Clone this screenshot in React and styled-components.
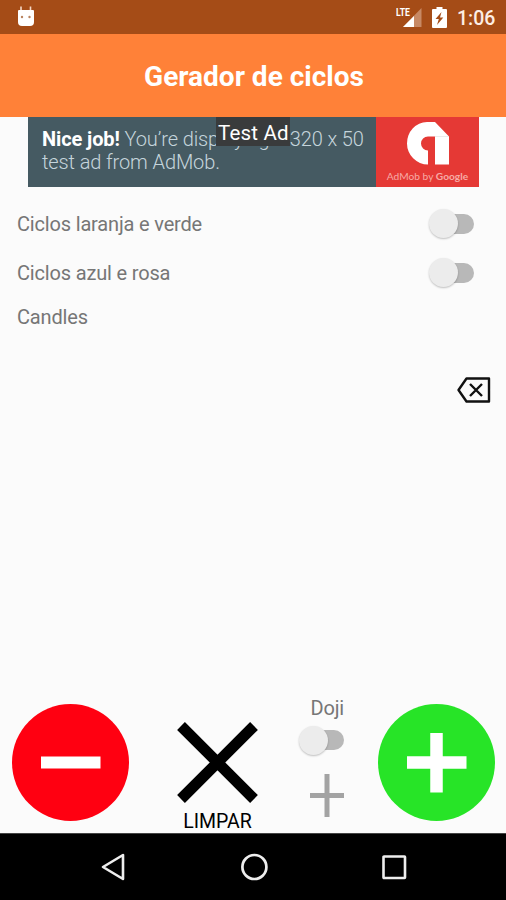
import { useState } from 'react';
import styled, { createGlobalStyle } from 'styled-components';

const GlobalStyle = createGlobalStyle`
  * {
    box-sizing: border-box;
  }

  body {
    margin: 0;
    background: #fbfbfb;
    font-family: Roboto, 'Liberation Sans', sans-serif;
  }

  button {
    padding: 0;
    border: 0;
    background: none;
    font-family: inherit;
    cursor: pointer;
  }

  svg {
    display: block;
  }
`;

const Screen = styled.div`
  display: flex;
  flex-direction: column;
  width: 506px;
  height: 900px;
  overflow: hidden;
`;

// Android status bar
const StatusBar = styled.div`
  display: flex;
  align-items: center;
  height: 34px;
  padding: 0 11px 0 17px;
  background: #a54c17;
  color: #fff;
`;

const StatusIcons = styled.div`
  display: flex;
  align-items: center;
  gap: 10px;
  margin-left: auto;
`;

const Clock = styled.span`
  width: 38px;
  padding-top: 3px;
  color: #fdeee5;
  font-size: 19.5px;
  font-weight: 500;
  line-height: 24px;
  white-space: nowrap;
`;

const Header = styled.header`
  display: flex;
  align-items: center;
  justify-content: center;
  height: 83px;
  padding: 3px 0 0 2px;
  background: #ff8138;
`;

const Title = styled.h1`
  margin: 0;
  color: #fff;
  font-size: 28px;
  font-weight: 700;
  line-height: 34px;
`;

// Ad banner
const Banner = styled.div`
  position: relative;
  display: flex;
  width: 451px;
  height: 70px;
  margin-left: 28px;
  background: #455a62;
`;

const BannerText = styled.p`
  flex: 1;
  margin: 0;
  padding: 11px 0 0 14px;
  color: #c5d5dc;
  font-size: 20px;
  font-weight: 300;
  line-height: 23px;
  letter-spacing: -0.11px;
  white-space: nowrap;

  strong {
    color: #fff;
    font-weight: 700;
  }
`;

const BannerTag = styled.span`
  position: absolute;
  top: 0;
  left: 188px;
  width: 74px;
  height: 29px;
  padding-left: 2px;
  background: #393b3c;
  color: #fff;
  font-size: 20.5px;
  line-height: 32px;
  letter-spacing: 0.2px;
  white-space: nowrap;
`;

const BannerLogo = styled.div`
  display: flex;
  flex-direction: column;
  align-items: center;
  width: 103px;
  padding-top: 5px;
  background: #e53935;
`;

const LogoCaption = styled.span`
  margin-top: 4px;
  color: #f7aaa5;
  font-family: Lato, sans-serif;
  font-size: 10.2px;
  line-height: 14px;
  white-space: nowrap;

  b {
    font-weight: 700;
  }
`;

const Content = styled.main`
  display: flex;
  flex: 1;
  flex-direction: column;
`;

const Options = styled.div`
  display: flex;
  flex-direction: column;
  padding: 12px 32px 0 17px;
`;

const OptionRow = styled.div`
  display: flex;
  align-items: center;
  justify-content: space-between;
  height: ${({ $height }) => $height}px;
`;

const Label = styled.span`
  padding-top: 1px;
  color: #767676;
  font-size: 20px;
  line-height: 24px;
  letter-spacing: -0.17px;
`;

const Track = styled.button`
  position: relative;
  display: flex;
  align-items: center;
  justify-content: ${({ $on }) => ($on ? 'flex-end' : 'flex-start')};
  width: 45px;
  height: 30px;

  &::before {
    content: '';
    position: absolute;
    inset: 5px 0 5px 5px;
    border-radius: 10px;
    background: #b8b8b8;
  }
`;

const Thumb = styled.span`
  position: relative;
  width: 29px;
  height: 29px;
  border-radius: 50%;
  background: #ececec;
  box-shadow: 0 1px 2px rgba(0, 0, 0, 0.24);
`;

const EraseButton = styled.button`
  align-self: flex-end;
  margin: 40px 15px 0 0;
`;

const Controls = styled.div`
  display: flex;
  align-items: flex-start;
  height: 138px;
  margin-top: auto;
  padding: 0 11px 0 12px;
`;

const RoundButton = styled.button`
  width: 117px;
  height: 117px;
  margin-top: 9px;
  border-radius: 50%;
  background: ${({ $color }) => $color};
`;

const ClearButton = styled.button`
  display: flex;
  flex-direction: column;
  align-items: center;
  width: 81px;
  margin: 27px 0 0 48px;
  color: #000;
  font-size: 19.5px;
  line-height: 24px;

  span {
    margin-top: 7px;
  }
`;

const DojiColumn = styled.div`
  display: flex;
  flex-direction: column;
  align-items: flex-end;
  gap: 5px;
  width: 46px;
  margin: 0 34px 0 40px;
`;

const DojiButton = styled.button`
  margin-top: 14px;
`;

// Android navigation bar
const NavBar = styled.nav`
  display: flex;
  align-items: center;
  justify-content: space-between;
  height: 67px;
  padding: 0 99px 0 101px;
  border-top: 1px solid #444;
  background: #000;
`;

function AndroidIcon() {
  return (
    <svg width="18" height="26" viewBox="0 0 18 26">
      <path d="M4 2.5v5M13.5 2.5v5" stroke="#f4d8c5" strokeWidth="1.6" />
      <path
        d="M2 6h14a1 1 0 0 1 1 1v11a4 4 0 0 1-4 4H5a4 4 0 0 1-4-4V7a1 1 0 0 1 1-1z"
        fill="#fff"
      />
      <circle cx="5" cy="13" r="1.2" fill="#b9835f" />
      <circle cx="12.5" cy="13" r="1.2" fill="#b9835f" />
    </svg>
  );
}

function SignalIcon() {
  return (
    <svg width="26" height="22" viewBox="0 0 26 22">
      <path d="M25.5 2v19H7z" fill="#c78965" />
      <path d="M18 10v11H7z" fill="#fff" />
      <rect x="0" y="0" width="15" height="11" fill="#a54c17" />
      <text x="0" y="10" fill="#fff" fontSize="11" fontWeight="700" textLength="14" lengthAdjust="spacingAndGlyphs">
        LTE
      </text>
    </svg>
  );
}

function BatteryIcon() {
  return (
    <svg width="15" height="22" viewBox="0 0 15 22">
      <path d="M4.5 1h6v2H14a1 1 0 0 1 1 1v17a1 1 0 0 1-1 1H1a1 1 0 0 1-1-1V4a1 1 0 0 1 1-1h3.5z" fill="#fff" />
      <path d="M9.5 6 3.5 13h3.3L5 19l6.3-7.5H8z" fill="#a54c17" />
    </svg>
  );
}

function AdMobLogo() {
  return (
    <svg width="44" height="43" viewBox="0 0 44 43">
      <path
        d="M29 0H21A20.5 21 0 0 0 1 21.5 21 21 0 0 0 22 42.5V28.5A7 7 0 0 1 15 21.5 7 7 0 0 1 22 14.5H29V42.5H43V14.5z"
        fill="#fff"
      />
      <path d="M29 14.5H43" stroke="#e6e6e6" strokeWidth="0.8" />
    </svg>
  );
}

function Switch({ label }) {
  const [on, setOn] = useState(false);

  return (
    <Track type="button" role="switch" aria-checked={on} aria-label={label} $on={on} onClick={() => setOn(!on)}>
      <Thumb />
    </Track>
  );
}

function App() {
  return (
    <Screen>
      <GlobalStyle />
      <StatusBar>
        <AndroidIcon />
        <StatusIcons>
          <SignalIcon />
          <BatteryIcon />
          <Clock>1:06</Clock>
        </StatusIcons>
      </StatusBar>
      <Header>
        <Title>Gerador de ciclos</Title>
      </Header>
      <Content>
        <Banner>
          <BannerText>
            <strong>Nice job!</strong> You’re displaying a 320 x 50
            <br />
            test ad from AdMob.
          </BannerText>
          <BannerLogo>
            <AdMobLogo />
            <LogoCaption>
              AdMob by <b>Google</b>
            </LogoCaption>
          </BannerLogo>
          <BannerTag>Test Ad</BannerTag>
        </Banner>
        <Options>
          <OptionRow $height={49}>
            <Label>Ciclos laranja e verde</Label>
            <Switch label="Ciclos laranja e verde" />
          </OptionRow>
          <OptionRow $height={49}>
            <Label>Ciclos azul e rosa</Label>
            <Switch label="Ciclos azul e rosa" />
          </OptionRow>
          <OptionRow $height={39}>
            <Label>Candles</Label>
          </OptionRow>
        </Options>
        <EraseButton type="button" aria-label="Apagar">
          <svg width="35" height="28" viewBox="0 0 35 28" fill="none" stroke="#111" strokeWidth="2.4">
            <path d="M10.5 2.5H33V25.5H10.5L2.5 14z" strokeLinejoin="round" />
            <path d="M14 8 26 20M26 8 14 20" />
          </svg>
        </EraseButton>
        {/* Candle buttons */}
        <Controls>
          <RoundButton type="button" aria-label="Menos" $color="#ff0011">
            <svg width="117" height="117" viewBox="0 0 117 117">
              <path d="M29 52.5H88.5V64.5H29z" fill="#fff" />
            </svg>
          </RoundButton>
          <ClearButton type="button">
            <svg width="81" height="81" viewBox="0 0 81 81">
              <path d="M4 4 77 77M77 4 4 77" stroke="#000" strokeWidth="11" />
            </svg>
            <span>LIMPAR</span>
          </ClearButton>
          <DojiColumn>
            <Label>Doji</Label>
            <Switch label="Doji" />
            <DojiButton type="button" aria-label="Adicionar doji">
              <svg width="34" height="43" viewBox="0 0 34 43">
                <path d="M0 21.5H34M17 0V43" stroke="#a3a3a3" strokeWidth="5" />
              </svg>
            </DojiButton>
          </DojiColumn>
          <RoundButton type="button" aria-label="Mais" $color="#27e427">
            <svg width="117" height="117" viewBox="0 0 117 117">
              <path d="M29 58.5H88.5M58.5 29V88.5" stroke="#fff" strokeWidth="12.5" />
            </svg>
          </RoundButton>
        </Controls>
      </Content>
      <NavBar>
        <svg width="26" height="28" viewBox="0 0 26 28" fill="none" stroke="#eee" strokeWidth="2.6" strokeLinejoin="round">
          <path d="M22 2V26L2 14z" />
        </svg>
        <svg width="28" height="28" viewBox="0 0 28 28" fill="none" stroke="#eee" strokeWidth="2.7">
          <circle cx="13.4" cy="14" r="12" />
        </svg>
        <svg width="25" height="25" viewBox="0 0 25 25" fill="none" stroke="#eee" strokeWidth="2.6">
          <rect x="1.5" y="1.5" width="21.5" height="21.5" rx="0.5" />
        </svg>
      </NavBar>
    </Screen>
  );
}

export default App;
